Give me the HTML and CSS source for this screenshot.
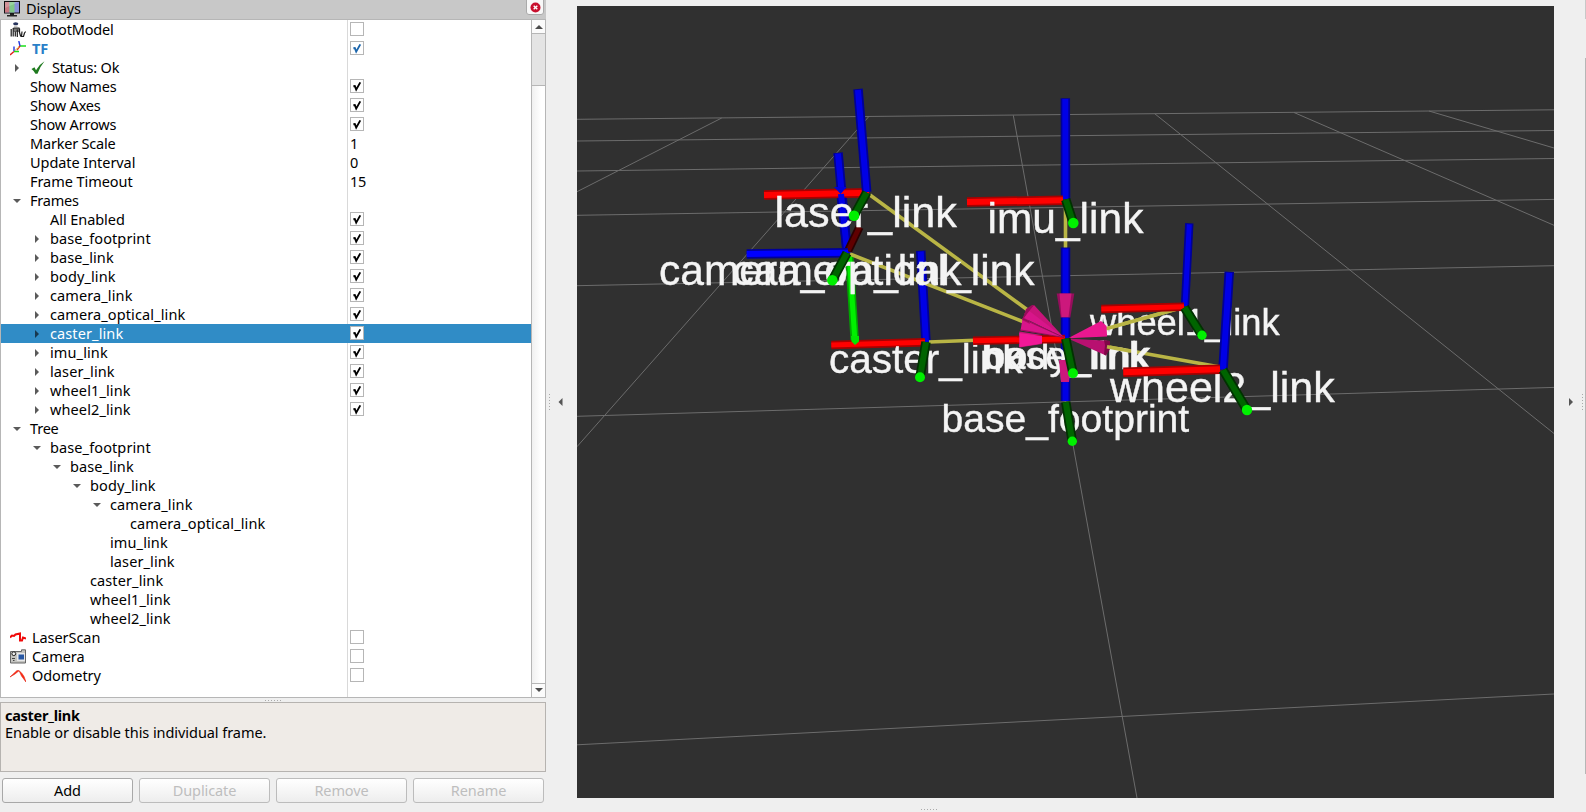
FILE: index.html
```html
<!DOCTYPE html>
<html lang="en">
<head>
<meta charset="utf-8">
<title>RViz</title>
<link rel="stylesheet" href="styles.css">
</head>
<body>
<svg class="defs" width="0" height="0">
  <symbol id="tick" viewBox="0 0 14 14"><path d="M3.400 7.200 L4.800 7 L6.200 10.600 L10.300 3.400" fill="none" stroke="currentColor" stroke-width="1.900"/></symbol>
  <symbol id="right" viewBox="0 0 8 8"><path d="M2 0 L6 4 L2 8Z" fill="currentColor"/></symbol>
  <symbol id="down" viewBox="0 0 8 8"><path d="M0 2 H8 L4 6Z" fill="currentColor"/></symbol>
</svg>
<div class="window">
  <aside class="dock">
    <header class="titlebar">
      <svg class="monitor" width="16" height="16" viewBox="0 0 16 16"><path d="M6 12h4v2h3v1.500H3V14h3z" fill="#222"/><rect x=".5" y=".5" width="15" height="11.500" fill="#8890d8" stroke="#111"/><path d="M1 1h4.500v10.500H1z" fill="#c87880"/><path d="M5.500 1h5v10.500h-5z" fill="#80c888"/><path d="M1 1h14L1 7z" fill="#fff" opacity=".2"/></svg>
      <span class="title">Displays</span>
      <button class="close"><svg width="11" height="11" viewBox="0 0 11 11"><circle cx="5.500" cy="5.500" r="5" fill="#c8102e"/><path d="M3.700 3.700l3.600 3.600M7.300 3.700l-3.600 3.600" stroke="#fff" stroke-width="1.400"/></svg></button>
    </header>
    <section class="tree">
      <div class="rows">
        <div class="row"><div class="name d0"><svg class="icon" width="16" height="16" viewBox="0 0 16 16"><ellipse cx="5.700" cy="1.700" rx="2.600" ry="1.500" fill="#26335c"/><path d="M4 3.500h3.500v1.300H4z" fill="#bbb"/><path d="M3.500 6h6v4h-6z" fill="#777"/><g fill="none" stroke="#1a1a1a" stroke-width="1.200"><path d="M1.200 7v7.500M3.200 6v8.500M5.300 9.500v5M7.300 7.500v7.500M3.500 6h6M9.500 6.500v4l1.200 4M12 9.500l-.500 5h2l1-3.500 1.200-1.500"/></g></svg>RobotModel</div><div class="value"><i class="box"></i></div></div>
        <div class="row"><div class="name d0 tf"><svg class="icon" width="16" height="16" viewBox="0 0 16 16"><g fill="none" stroke-width="1.400"><path d="M10 5H16M4 10.500H9" stroke="#1be01b"/><path d="M10 5L8.800 0M4 10V5.500" stroke="#2338e0"/><path d="M10 5L7 9M4 10.500L0 14" stroke="#e02020"/><path d="M9 6L4.500 10" stroke="#d8b030" stroke-dasharray="1 1"/></g></svg>TF</div><div class="value"><i class="box blue"><svg><use href="#tick"/></svg></i></div></div>
        <div class="row"><div class="name d1"><svg class="arrow"><use href="#right"/></svg><svg class="status" width="14" height="14" viewBox="0 0 14 14"><path d="M.500 8l3-1.700 1.500 3Q8 3.600 13.500.300 9.400 5 6.500 12.800H4.400Q2.800 9.600 .500 8z" fill="#1f7a1f"/></svg>Status: Ok</div><div class="value"></div></div>
        <div class="row"><div class="name d1">Show Names</div><div class="value"><i class="box"><svg><use href="#tick"/></svg></i></div></div>
        <div class="row"><div class="name d1">Show Axes</div><div class="value"><i class="box"><svg><use href="#tick"/></svg></i></div></div>
        <div class="row"><div class="name d1">Show Arrows</div><div class="value"><i class="box"><svg><use href="#tick"/></svg></i></div></div>
        <div class="row"><div class="name d1">Marker Scale</div><div class="value">1</div></div>
        <div class="row"><div class="name d1 wide">Update Interval</div><div class="value">0</div></div>
        <div class="row"><div class="name d1 wide">Frame Timeout</div><div class="value">15</div></div>
        <div class="row"><div class="name d1"><svg class="arrow"><use href="#down"/></svg>Frames</div><div class="value"></div></div>
        <div class="row"><div class="name d2 wide">All Enabled</div><div class="value"><i class="box"><svg><use href="#tick"/></svg></i></div></div>
        <div class="row"><div class="name d2 link-name"><svg class="arrow"><use href="#right"/></svg>base_footprint</div><div class="value"><i class="box"><svg><use href="#tick"/></svg></i></div></div>
        <div class="row"><div class="name d2 link-name"><svg class="arrow"><use href="#right"/></svg>base_link</div><div class="value"><i class="box"><svg><use href="#tick"/></svg></i></div></div>
        <div class="row"><div class="name d2 link-name"><svg class="arrow"><use href="#right"/></svg>body_link</div><div class="value"><i class="box"><svg><use href="#tick"/></svg></i></div></div>
        <div class="row"><div class="name d2 link-name"><svg class="arrow"><use href="#right"/></svg>camera_link</div><div class="value"><i class="box"><svg><use href="#tick"/></svg></i></div></div>
        <div class="row"><div class="name d2 link-name"><svg class="arrow"><use href="#right"/></svg>camera_optical_link</div><div class="value"><i class="box"><svg><use href="#tick"/></svg></i></div></div>
        <div class="row selected"><div class="name d2 link-name"><svg class="arrow"><use href="#right"/></svg>caster_link</div><div class="value"><i class="box"><svg><use href="#tick"/></svg></i></div></div>
        <div class="row"><div class="name d2 link-name"><svg class="arrow"><use href="#right"/></svg>imu_link</div><div class="value"><i class="box"><svg><use href="#tick"/></svg></i></div></div>
        <div class="row"><div class="name d2 link-name"><svg class="arrow"><use href="#right"/></svg>laser_link</div><div class="value"><i class="box"><svg><use href="#tick"/></svg></i></div></div>
        <div class="row"><div class="name d2 link-name"><svg class="arrow"><use href="#right"/></svg>wheel1_link</div><div class="value"><i class="box"><svg><use href="#tick"/></svg></i></div></div>
        <div class="row"><div class="name d2 link-name"><svg class="arrow"><use href="#right"/></svg>wheel2_link</div><div class="value"><i class="box"><svg><use href="#tick"/></svg></i></div></div>
        <div class="row"><div class="name d1"><svg class="arrow"><use href="#down"/></svg>Tree</div><div class="value"></div></div>
        <div class="row"><div class="name d2 link-name"><svg class="arrow"><use href="#down"/></svg>base_footprint</div><div class="value"></div></div>
        <div class="row"><div class="name d3 link-name"><svg class="arrow"><use href="#down"/></svg>base_link</div><div class="value"></div></div>
        <div class="row"><div class="name d4 link-name"><svg class="arrow"><use href="#down"/></svg>body_link</div><div class="value"></div></div>
        <div class="row"><div class="name d5 link-name"><svg class="arrow"><use href="#down"/></svg>camera_link</div><div class="value"></div></div>
        <div class="row"><div class="name d6 link-name">camera_optical_link</div><div class="value"></div></div>
        <div class="row"><div class="name d5 link-name">imu_link</div><div class="value"></div></div>
        <div class="row"><div class="name d5 link-name">laser_link</div><div class="value"></div></div>
        <div class="row"><div class="name d4 link-name">caster_link</div><div class="value"></div></div>
        <div class="row"><div class="name d4 link-name">wheel1_link</div><div class="value"></div></div>
        <div class="row"><div class="name d4 link-name">wheel2_link</div><div class="value"></div></div>
        <div class="row"><div class="name d0 wide"><svg class="icon" width="16" height="16" viewBox="0 0 16 16"><path d="M0 7.500L2 5.500 4 6 5.500 4.500 10 3.500V10.500H12L13 7.500 16 8.500" fill="none" stroke="#f00a0a" stroke-width="2"/></svg>LaserScan</div><div class="value"><i class="box"></i></div></div>
        <div class="row"><div class="name d0 wide"><svg class="icon" width="16" height="16" viewBox="0 0 16 16"><path d="M.500 2.500h11V.800h4v13.200H.500z" fill="#c4c4c0" stroke="#666"/><circle cx="3.800" cy="4.700" r="1.900" fill="#eee" stroke="#222"/><rect x="7" y="4" width="8" height="8" fill="#e8e8e8"/><rect x="8.500" y="5.500" width="5.500" height="5" fill="#2858a4"/><path d="M2 9.500h3M3 11.500h1.500" stroke="#444"/></svg>Camera</div><div class="value"><i class="box"></i></div></div>
        <div class="row"><div class="name d0 wide"><svg class="icon" width="16" height="16" viewBox="0 0 16 16"><path d="M0 9L7 2.500 9 2.800 5 6z M9 2.500L12 5.500 14 8.500 16 14 11.500 8z" fill="#ff2a10" stroke="#e02010" stroke-width=".600"/></svg>Odometry</div><div class="value"><i class="box"></i></div></div>
        <div class="row filler"><div class="name"></div><div class="value"></div></div>
      </div>
      <div class="scrollbar">
        <div class="step"><svg class="up" width="8" height="8"><use href="#down"/></svg></div>
        <div class="thumb"></div>
        <div class="track"></div>
        <div class="step last"><svg width="8" height="8"><use href="#down"/></svg></div>
      </div>
    </section>
    <div class="splitter"><i class="dots"></i></div>
    <section class="help"><b>caster_link</b><p>Enable or disable this individual frame.</p></section>
    <div class="buttons"><button>Add</button><button disabled>Duplicate</button><button disabled>Remove</button><button disabled>Rename</button></div>
  </aside>
  <div class="gutter left"><i class="vdots"></i><svg class="collapse" width="5" height="8" viewBox="0 0 5 8"><path d="M4.500 0v8L.500 4z" fill="#555"/></svg></div>
  <main class="view">
    <svg class="scene" viewBox="577 6 977 792" width="977" height="792">
      <g class="grid">
        <path d="M577 119.300L1554 109.800M577 141L1554 130.500M577 171L1554 158.500M577 215.300L1554 199.400M577 285.700L1554 265.700M577 416.300L1554 387.400M577 744.800L1554 694"/>
        <path d="M721.700 118L577 191.700M869.300 116L577 446.700M1013.300 115.300L1137 798M1154.700 113.700L1554 433.500M1294 112.500L1554 225.300M1429 111L1554 148"/>
      </g>
      <!-- camera and laser frames -->
      <g class="blue"><path class="e w9" d="M838 152.700L847.300 253"/><path class="c w9" d="M838 153.500L847.300 253"/></g>
      <g class="red"><path class="e w9" d="M764 195L869 192.700"/><path class="c w9" d="M764 195L869 192.700"/></g>
      <g class="blue"><path class="e w9" d="M841.500 198L847.300 253"/><path class="c w9" d="M841 194L847.300 253"/></g>
      <path class="blue-tip" d="M834 187L840.700 194L846.500 187z"/>
      <g class="blue"><path class="e w9" d="M858 89L866.700 192"/><path class="c w9" d="M858 90L866.700 192"/></g>
      <g class="maroon"><path class="e w8" d="M859.500 227L848 251"/><path class="c w8" d="M859.500 227L848 251"/></g>
      <g class="blue side"><path class="e w9" d="M746.700 254L848 252.700"/><path class="c w9" d="M746.700 254L848 252.700"/></g>
      <g class="lime"><path class="e w8" d="M849.300 256L854.700 340"/><path class="c w8" d="M849.300 256L855 342.500"/></g>
      <!-- caster and imu -->
      <g class="blue"><path class="e w9" d="M920.700 250.700L926 342"/><path class="c w9" d="M920.700 251.500L926 342"/></g>
      <g class="red"><path class="e w8" d="M831.300 345L925 342.300"/><path class="c w8" d="M831.300 345L925 342.300"/></g>
      <path class="lime-tip" d="M851 336h8v5.500l-4 3.500-3.500-3.500z"/>
      <g class="blue"><path class="e w9" d="M1065.300 98.300L1065.500 199"/><path class="c w9" d="M1065.300 99L1065.500 199"/></g>
      <g class="link"><path d="M870 195L1029 311M850 254L1024 322M929 342L975 340.300M1065.500 202V249M1106 328.700L1184 307M1106 346.500L1220 367"/></g>
      <g class="red"><path class="e w9" d="M967 202L1063 200.300"/><path class="c w9" d="M967 202L1063 200.300"/></g>
      <g class="blue"><path class="e w9" d="M1065.500 247.500V401"/><path class="c w9" d="M1065.500 248.500V401"/></g>
      <g class="label">
        <text x="774.500" y="226.700" font-size="43.200">laser_link</text>
        <text x="987.500" y="233.300" font-size="42.500">imu_link</text>
        <text x="659" y="285" font-size="42.500">camera_optical_link</text>
        <text x="732.500" y="285" font-size="42.500">camera_link</text>
        <text x="829" y="372.700" font-size="40.500">caster_link</text>
        <text x="981.500" y="368.800" font-size="39.500">base_link</text>
        <text x="983.500" y="368.800" font-size="39.500">body_link</text>
        <text x="941.500" y="431.700" font-size="39.100">base_footprint</text>
        <text x="1090" y="334.800" font-size="36.300">wheel1_link</text>
        <text x="1110" y="402.300" font-size="43">wheel2_link</text>
      </g>
      <g class="link"><path d="M1106 328.700L1184 307"/></g>
      <g class="blue"><path class="e w8" d="M1189.300 223.300L1185 306"/><path class="c w8" d="M1189.300 224.300L1185 306"/></g>
      <g class="red"><path class="e w8" d="M1101.300 309L1184 306.700"/><path class="c w8" d="M1101.300 309L1184 306.700"/></g>
      <g class="blue"><path class="e w9" d="M1229.300 271.700L1223 369.500"/><path class="c w9" d="M1229.300 272.700L1223 369.500"/></g>
      <g class="red"><path class="e w9" d="M1123.300 372.300L1220 369.300"/><path class="c w9" d="M1123.300 372.300L1220 369.300"/></g>
      <!-- parent arrows -->
      <path fill="#c5187a" d="M1019.300 331.500L1042 335V344L1019.300 347.500z"/>
      <g class="red"><path class="e w8" d="M973 340.700L1065 339"/><path class="c w8" d="M973 340.700L1065 339"/></g>
      <path fill="#f21898" d="M1019.300 333L1042 336V343.500L1019.300 347z"/>
      <path fill="#d8158a" d="M1064 337.500L1022.700 318L1020.500 330.500z"/>
      <path fill="#a80e65" d="M1022 320l2-5 4 4 2 5z"/>
      <path fill="#c8147a" d="M1064 337.500L1024 314L1034 305z"/>
      <path fill="#d8158a" d="M1064 337.500L1028 310L1024 318z"/>
      <path fill="#9a0c5c" d="M1034 305l-11 14 3-10 6-4z"/>
      <path stroke="#8a0a50" stroke-width=".800" fill="none" d="M1064 337.500L1023 319M1064 337.500L1021 330"/>
      <path fill="#960e5c" d="M1056.700 293.500h17.600l-4 24h-9.600z"/>
      <path fill="#cc187c" d="M1059.500 293.500h12l-3 23.500h-7z"/>
      <path fill="#cc187c" d="M1059 360h13l-3 22h-8z"/>
      <path fill="#ea178f" d="M1068 338.200L1101 321L1106.500 326L1107 336.500z"/>
      <path fill="#b81070" d="M1068 338.500L1110 341L1106 355.500z"/>
      <path fill="#800848" d="M1104 340l6 1v8l-4 6.500-2-1 1-9z"/>
      <path class="link" d="M1107 346.800L1130 351"/>
      <!-- y axes and their end caps -->
      <g class="green">
        <path class="e w9" d="M866.700 192.500L854 215.700M847 253L832.300 280.300M926 342L920 377.300M1065.700 199.500L1073.300 223M1065.700 338.500L1073 373.300M1065.700 402L1072.300 441.300M1184.500 307.500L1202 335.300M1223 370L1247 410"/>
        <path class="c w9" d="M866.700 192.500L854 215.700M847 253L832.300 280.300M926 342L920 377.300M1065.700 199.500L1073.300 223M1065.700 338.500L1073 373.300M1065.700 402L1072.300 441.300M1184.500 307.500L1202 335.300M1223 370L1247 410"/>
      </g>
      <g class="caps"><circle cx="854" cy="215.700" r="5.300"/><circle cx="832.300" cy="280.300" r="5.300"/><circle cx="920" cy="377.300" r="5"/><circle cx="1073.300" cy="223" r="5.300"/><circle cx="1073" cy="373.300" r="5"/><circle cx="1072.300" cy="441.300" r="4.700"/><circle cx="1202" cy="335.300" r="4.700"/><circle cx="1247" cy="410" r="5.200"/></g>
    </svg>
    <i class="dots bottom"></i>
  </main>
  <div class="gutter right"><svg class="collapse" width="4" height="8" viewBox="0 0 4 8"><path d="M0 0v8L4 4z" fill="#555"/></svg><i class="vdots"></i></div>
  <div class="edge"><i class="tab"></i><i class="pane"></i></div>
</div>
</body>
</html>
```

FILE: styles.css
```css
* { box-sizing: border-box; }
body { margin: 0; background: #efefef; font-family: "Noto Sans", "Open Sans", sans-serif; font-size: 14.5px; letter-spacing: -0.2px; color: #000; overflow: hidden; }
.defs { display: block; height: 0; }
.window { display: flex; width: 1586px; height: 812px; }

.dock { width: 546px; display: flex; flex-direction: column; }
.titlebar { height: 19px; background: #c8c8c8; display: flex; align-items: flex-start; padding-left: 4px; }
.monitor { margin-top: 1px; }
.title { margin-left: 6px; line-height: 17px; flex: 1; }
.close { width: 18px; height: 18px; margin: -3px 2px 0 0; padding: 2px 0 0; border: 1px solid #aaa; border-radius: 3px; background: #f8f8f8; display: flex; justify-content: center; align-items: center; }

.tree { height: 679px; border: 1px solid #b6b6b6; background: #fff; display: flex; }
.rows { flex: 1; display: flex; flex-direction: column; }
.row { height: 19px; flex: none; display: flex; line-height: 19px; white-space: pre; }
.row.filler { flex: 1; height: auto; }
.name { width: 347px; border-right: 1px solid #d9d9d9; display: flex; align-items: center; }
.wide { letter-spacing: -0.06px; }
.link-name { letter-spacing: 0.11px; }
.value { flex: 1; padding-left: 2px; display: flex; align-items: center; }
.d0 { padding-left: 9px; }
.d1 { padding-left: 29px; }
.d2 { padding-left: 49px; }
.d3 { padding-left: 69px; }
.d4 { padding-left: 89px; }
.d5 { padding-left: 109px; }
.d6 { padding-left: 129px; }
.icon { margin-right: 6px; }
.status { margin: 0 7px 0 1px; }
.arrow { width: 8px; height: 8px; margin: 0 9px 0 -17px; color: #5a5a5a; }
.tf { color: #2a80c8; font-weight: bold; }
.box { width: 14px; height: 14px; border: 1px solid #b6b6b6; background: #fff; color: #000; margin-bottom: 1px; }
.box svg { display: block; width: 14px; height: 14px; margin: -1px; }
.box.blue { color: #1c66ac; }
.selected { background: #308cc6; color: #fff; }
.selected .name { border-color: #308cc6; }
.selected .arrow { color: #17384f; }

.scrollbar { width: 14px; border-left: 1px solid #b6b6b6; background: linear-gradient(90deg, #f0f0f0, #fff 70%); display: flex; flex-direction: column; }
.step { height: 13px; display: flex; align-items: center; justify-content: center; color: #4c4c4c; background: #fbfbfb; }
.step.last { height: 14px; padding-bottom: 1px; border-top: 1px solid #b6b6b6; }
.up { transform: rotate(180deg); }
.thumb { height: 53px; border: solid #b6b6b6; border-width: 1px 0; background: #e4e4e4; }
.track { flex: 1; }

.splitter { height: 4px; display: flex; justify-content: center; align-items: center; }
.dots { width: 17px; height: 1px; background: repeating-linear-gradient(90deg, #aaa 0 1px, transparent 1px 3px); }
.help { height: 70px; border: 1px solid #b6b3b0; background: #efebe7; padding: 4px; line-height: 17px; letter-spacing: -0.06px; }
.help b { display: block; letter-spacing: -0.3px; }
.help p { margin: 0; }
.buttons { display: flex; gap: 6px; padding: 6px 2px; }
.buttons button { width: 131px; height: 25px; padding: 0 0 2px; font: inherit; letter-spacing: -0.1px; color: #000; border: 1px solid #a8a8a8; border-radius: 3px; background: linear-gradient(#fff, #ededed); }
.buttons button:disabled { color: #bebebe; border-color: #bcbcbc; }

.gutter { display: flex; align-items: center; padding-bottom: 8px; }
.left { width: 31px; padding-left: 3px; gap: 8px; }
.right { width: 31px; padding-left: 15px; gap: 9px; }
.vdots { width: 1px; height: 17px; background: repeating-linear-gradient(#aaa 0 1px, transparent 1px 3px); }
.edge { width: 1px; display: flex; flex-direction: column; gap: 39px; }
.tab { height: 19px; background: #c8c8c8; }
.pane { height: 716px; background: #b6b6b6; }

.view { width: 977px; padding-top: 6px; display: flex; flex-direction: column; }
.scene { display: block; background: #303030; }
.bottom { margin: 11px 0 0 344px; flex: none; }
.grid path { fill: none; stroke: #6c6c6c; stroke-width: 1; }
.w9 { stroke-width: 9.5; }
.w8 { stroke-width: 8.4; }
.c.w9 { stroke-width: 6; }
.c.w8 { stroke-width: 5; }
.e, .c { fill: none; }
.blue .e { stroke: #000096; }
.blue .c { stroke: #0000e6; }
.blue.side .c { stroke: #0000ff; }
.blue-tip { fill: #0000dc; }
.red .e { stroke: #a80000; }
.red .c { stroke: #ff0000; }
.maroon .e { stroke: #2c0000; }
.maroon .c { stroke: #600000; }
.lime .e { stroke: #00a800; }
.lime .c { stroke: #00f000; }
.lime-tip { fill: #00e800; }
.green .e { stroke: #003200; }
.green .c { stroke: #006400; }
.caps { fill: #00f000; }
.link { fill: none; stroke: #b9b545; stroke-width: 3.6; }
.label { fill: #f4f4f4; stroke: #f4f4f4; stroke-width: 0.4; font-family: "Liberation Sans", Arial, sans-serif; letter-spacing: 0; filter: blur(0.5px); }
```
